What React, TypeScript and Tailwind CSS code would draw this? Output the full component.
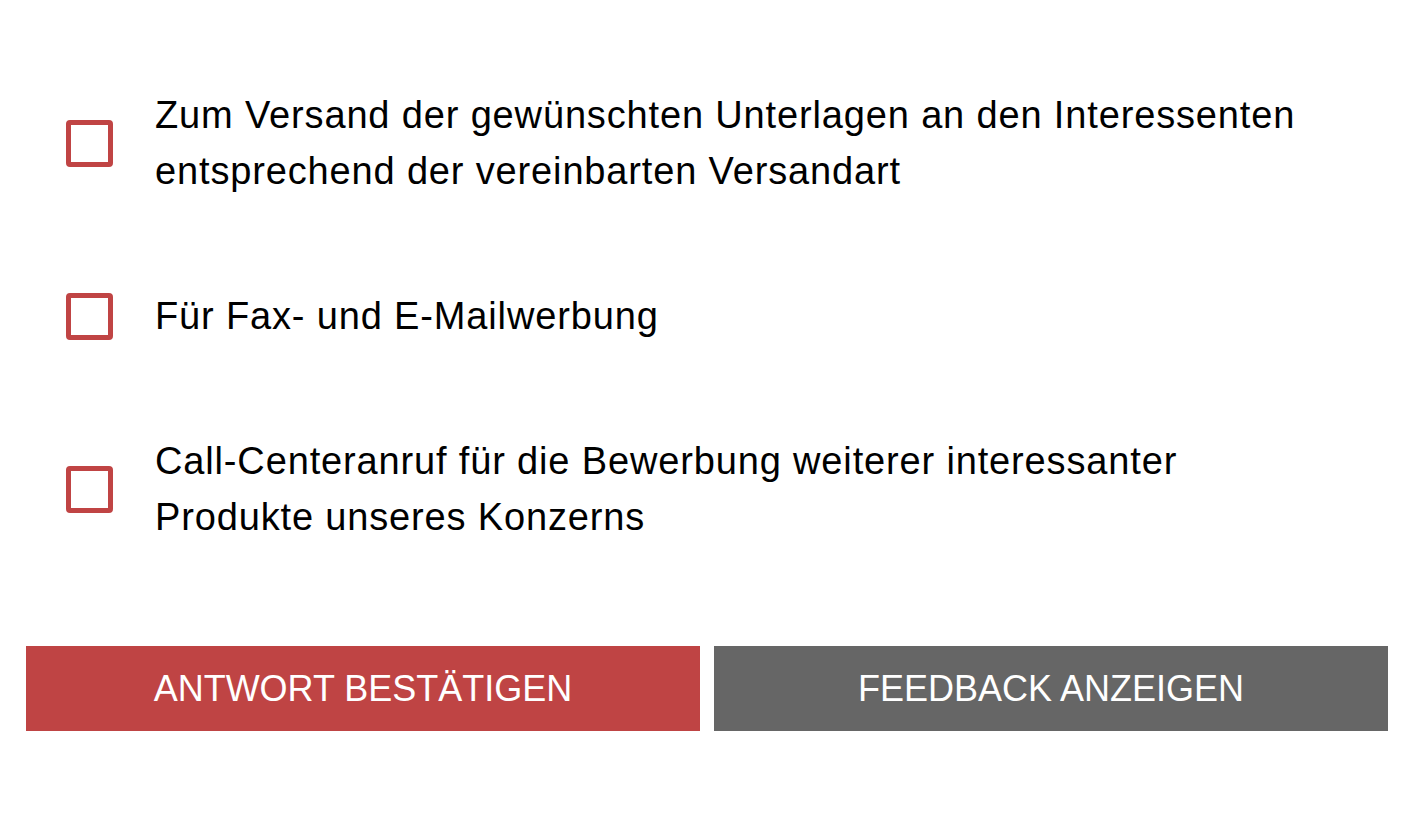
import React, { useState } from "react";

const options = [
  "Zum Versand der gewünschten Unterlagen an den Interessenten entsprechend der vereinbarten Versandart",
  "Für Fax- und E-Mailwerbung",
  "Call-Centeranruf für die Bewerbung weiterer interessanter Produkte unseres Konzerns",
];

export default function App() {
  const [checked, setChecked] = useState<boolean[]>([false, false, false]);

  const toggle = (i: number) =>
    setChecked((prev) => prev.map((v, j) => (j === i ? !v : v)));

  return (
    <div className="min-h-screen bg-white pl-[26px] pr-[22px] pt-[87px] font-['Liberation_Sans',Arial,sans-serif] text-black">
      <div className="flex flex-col gap-[89px]">
        {options.map((label, i) => (
          <label key={i} className="flex items-center cursor-pointer">
            <span className="ml-[40px] mr-[42px] flex h-[47px] w-[47px] shrink-0 items-center justify-center rounded-[4px] border-[5px] border-[#c04444] bg-white">
              {checked[i] && <span className="h-[21px] w-[21px] bg-[#c04444]" />}
            </span>
            <input
              type="checkbox"
              className="hidden"
              checked={checked[i]}
              onChange={() => toggle(i)}
            />
            <span className="max-w-[1170px] text-[38px] leading-[56px] tracking-[0.85px]">{label}</span>
          </label>
        ))}
      </div>

      <div className="mt-[101px] flex gap-[14px]">
        <button className="h-[85px] flex-1 bg-[#bf4444] text-[36px] text-white uppercase">
          Antwort bestätigen
        </button>
        <button className="h-[85px] flex-1 bg-[#666666] text-[36px] text-white uppercase">
          Feedback anzeigen
        </button>
      </div>
    </div>
  );
}
